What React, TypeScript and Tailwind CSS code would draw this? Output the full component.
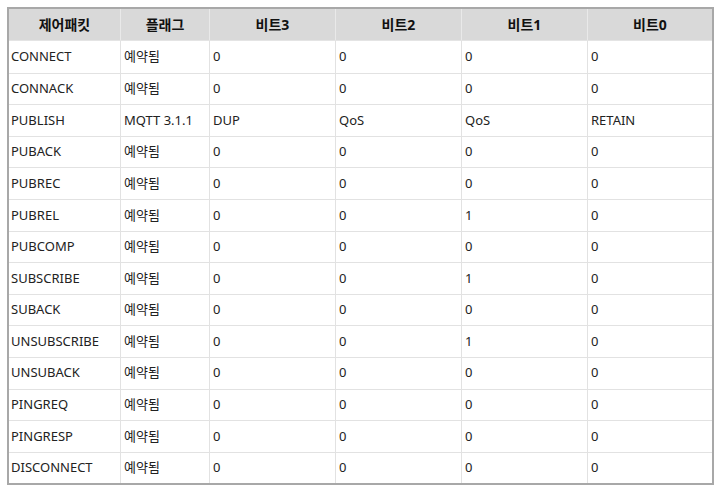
import React from "react";

const rows: string[][] = [
  ["CONNECT", "예약됨", "0", "0", "0", "0"],
  ["CONNACK", "예약됨", "0", "0", "0", "0"],
  ["PUBLISH", "MQTT 3.1.1", "DUP", "QoS", "QoS", "RETAIN"],
  ["PUBACK", "예약됨", "0", "0", "0", "0"],
  ["PUBREC", "예약됨", "0", "0", "0", "0"],
  ["PUBREL", "예약됨", "0", "0", "1", "0"],
  ["PUBCOMP", "예약됨", "0", "0", "0", "0"],
  ["SUBSCRIBE", "예약됨", "0", "0", "1", "0"],
  ["SUBACK", "예약됨", "0", "0", "0", "0"],
  ["UNSUBSCRIBE", "예약됨", "0", "0", "1", "0"],
  ["UNSUBACK", "예약됨", "0", "0", "0", "0"],
  ["PINGREQ", "예약됨", "0", "0", "0", "0"],
  ["PINGRESP", "예약됨", "0", "0", "0", "0"],
  ["DISCONNECT", "예약됨", "0", "0", "0", "0"],
];

const headers = ["제어패킷", "플래그", "비트3", "비트2", "비트1", "비트0"];

export default function App() {
  return (
    <div className="w-[720px] h-[492px] bg-white pl-[7px] pt-[7px]" style={{ fontFamily: '"Noto Sans", "Noto Sans CJK KR", sans-serif' }}>
      <div className="w-[707px] border-2 border-[#a8a8a8] bg-white">
        <div className="grid grid-cols-[111px_89px_126px_126px_126px_125px] h-[32px] bg-[#d9d9d9] border-b border-[#e4e4e4]">
          {headers.map((h, i) => (
            <div
              key={i}
              className={`flex items-center justify-center text-[14px] font-bold text-[#111] ${i > 0 ? "border-l border-[#e9e9e9]" : ""}`}
            >
              {h}
            </div>
          ))}
        </div>
        {rows.map((r, ri) => (
          <div
            key={ri}
            className={`grid grid-cols-[111px_89px_126px_126px_126px_125px] h-[31.6px] ${ri > 0 ? "border-t border-[#e2e2e2]" : ""}`}
          >
            {r.map((c, ci) => (
              <div
                key={ci}
                className={`flex items-center text-[13px] text-[#222] ${ci === 0 ? "pl-[2px]" : "pl-[3px] border-l border-[#e2e2e2]"}`}
              >
                {c}
              </div>
            ))}
          </div>
        ))}
      </div>
    </div>
  );
}
